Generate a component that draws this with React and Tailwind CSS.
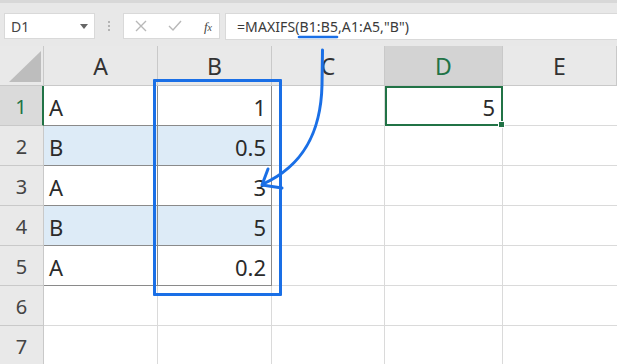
import React from "react";

const cols = ["A", "B", "C", "D", "E"];
const rows = [
  { n: 1, a: "A", b: "1", fill: false },
  { n: 2, a: "B", b: "0.5", fill: true },
  { n: 3, a: "A", b: "3", fill: false },
  { n: 4, a: "B", b: "5", fill: true },
  { n: 5, a: "A", b: "0.2", fill: false },
  { n: 6 },
  { n: 7 },
];

const font = { fontFamily: '"Noto Sans", "Liberation Sans", sans-serif' };

function Toolbar() {
  return (
    <div className="h-[46px] bg-[#e8e8e8] border-t-[3px] border-[#d8d8d8] flex items-start pt-[10px] pl-[4px] relative">
      <div className="w-[91px] h-[26px] bg-white border border-[#d9d9d9] flex items-center justify-between pl-[6px] pr-[6px]">
        <span className="text-[14px] text-[#444]">D1</span>
        <svg width="8" height="5" viewBox="0 0 8 5">
          <path d="M0 0 L8 0 L4 5 Z" fill="#666" />
        </svg>
      </div>
      <div className="w-[28px] h-[26px] flex flex-col items-center justify-center gap-[2px]">
        <span className="w-[2px] h-[2px] bg-[#b4b4b4]" />
        <span className="w-[2px] h-[2px] bg-[#b4b4b4]" />
        <span className="w-[2px] h-[2px] bg-[#b4b4b4]" />
      </div>
      <div className="w-[97px] h-[26px] bg-white border border-[#d9d9d9] flex items-center justify-between pl-[11px] pr-[7px]">
        <svg width="12" height="12" viewBox="0 0 12 12">
          <path d="M1 1 L11 11 M11 1 L1 11" stroke="#b8b8b8" strokeWidth="1.4" />
        </svg>
        <svg width="14" height="12" viewBox="0 0 14 12">
          <path d="M1 6 L5 10 L13 1" stroke="#b8b8b8" strokeWidth="1.4" fill="none" />
        </svg>
        <span
          className="text-[13px] italic text-[#444] leading-none"
          style={{ fontFamily: '"Liberation Serif", serif' }}
        >
          f<span className="text-[10px]">x</span>
        </span>
      </div>
      <div className="flex-1 ml-[5px] h-[27px] bg-white border border-[#d9d9d9] border-r-0 flex items-center pl-[11px]">
        <span className="text-[14px] text-[#3a3a3a] tracking-[0.1px]">=MAXIFS(B1:B5,A1:A5,"B")</span>
      </div>
    </div>
  );
}

function HeaderRow() {
  return (
    <>
      <div className="h-[40px] bg-[#e9e9e9] border-r border-b border-[#c9c9c9] flex items-end justify-end pr-[2px] pb-[3px]">
        <svg width="32" height="31" viewBox="0 0 32 31">
          <path d="M32 0 L32 31 L0 31 Z" fill="#bdbdbd" />
        </svg>
      </div>
      {cols.map((c) => {
        const sel = c === "D";
        return (
          <div
            key={c}
            className={
              sel
                ? "h-[40px] bg-[#d3d3d3] border-r border-b border-[#c9c9c9] flex items-center justify-center pt-[2px] text-[23px] text-[#217346]"
                : "h-[40px] bg-[#e9e9e9] border-r border-b border-[#c9c9c9] flex items-center justify-center pt-[2px] text-[23px] text-[#333]"
            }
          >
            {c}
          </div>
        );
      })}
    </>
  );
}

function DataRow({ r }) {
  const inData = r.n <= 5;
  const sel = r.n === 1;
  return (
    <>
      <div
        className={
          sel
            ? "h-[40px] bg-[#dadada] border-r-2 border-r-[#217346] border-b border-b-[#c9c9c9] flex items-center justify-center pt-[3px] text-[20px] text-[#217346]"
            : "h-[40px] bg-[#e9e9e9] border-r border-b border-[#c9c9c9] flex items-center justify-center pt-[3px] text-[20px] text-[#444]"
        }
      >
        {r.n}
      </div>
      <div
        className={
          inData
            ? r.fill
              ? "h-[40px] bg-[#ddebf7] border-r border-b border-[#8a8a8a] flex items-center pl-[5px] pt-[3px] text-[22px] text-[#2b2b2b]"
              : "h-[40px] bg-white border-r border-b border-[#8a8a8a] flex items-center pl-[5px] pt-[3px] text-[22px] text-[#2b2b2b]"
            : "h-[40px] bg-white border-r border-b border-[#dadada]"
        }
      >
        {r.a}
      </div>
      <div
        className={
          inData
            ? r.fill
              ? "h-[40px] bg-[#ddebf7] border-r border-b border-[#8a8a8a] flex items-center justify-end pr-[5px] pt-[3px] text-[22px] text-[#2b2b2b]"
              : "h-[40px] bg-white border-r border-b border-[#8a8a8a] flex items-center justify-end pr-[5px] pt-[3px] text-[22px] text-[#2b2b2b]"
            : "h-[40px] bg-white border-r border-b border-[#dadada]"
        }
      >
        {r.b}
      </div>
      <div className="h-[40px] bg-white border-r border-b border-[#dadada]" />
      <div
        className={
          sel
            ? "h-[40px] bg-white border-2 border-[#217346] flex items-center justify-end pr-[6px] pt-[2px] text-[22px] text-[#2b2b2b] relative"
            : "h-[40px] bg-white border-r border-b border-[#dadada]"
        }
      >
        {sel && "5"}
        {sel && (
          <span className="absolute right-[-4px] bottom-[-4px] w-[7px] h-[7px] bg-[#217346] border border-white" />
        )}
      </div>
      <div className="h-[40px] bg-white border-b border-[#dadada]" />
    </>
  );
}

export default function App() {
  return (
    <div className="w-[617px] h-[364px] overflow-hidden bg-white relative" style={font}>
      <Toolbar />
      <div className="grid grid-cols-[44px_114px_114px_113px_118px_1fr]">
        <HeaderRow />
        {rows.map((r) => (
          <DataRow key={r.n} r={r} />
        ))}
      </div>

      {/* range highlight drawn over the sheet */}
      <div className="absolute left-[153px] top-[79px] w-[129px] h-[217px] border-[3px] border-[#1a6fe6] rounded-[1px] pointer-events-none" />
      <svg
        className="absolute inset-0 pointer-events-none"
        width="617"
        height="364"
        viewBox="0 0 617 364"
      >
        <path d="M299 37 L337 37" stroke="#1a6fe6" strokeWidth="2.6" strokeLinecap="round" />
        <path
          d="M322.5 50 L322 85 C321 130 305 165 263 184"
          stroke="#1a6fe6"
          strokeWidth="3"
          fill="none"
          strokeLinecap="round"
        />
        <path
          d="M268 169 L262 185 L282 188"
          stroke="#1a6fe6"
          strokeWidth="3"
          fill="none"
          strokeLinecap="round"
          strokeLinejoin="round"
        />
      </svg>
    </div>
  );
}
